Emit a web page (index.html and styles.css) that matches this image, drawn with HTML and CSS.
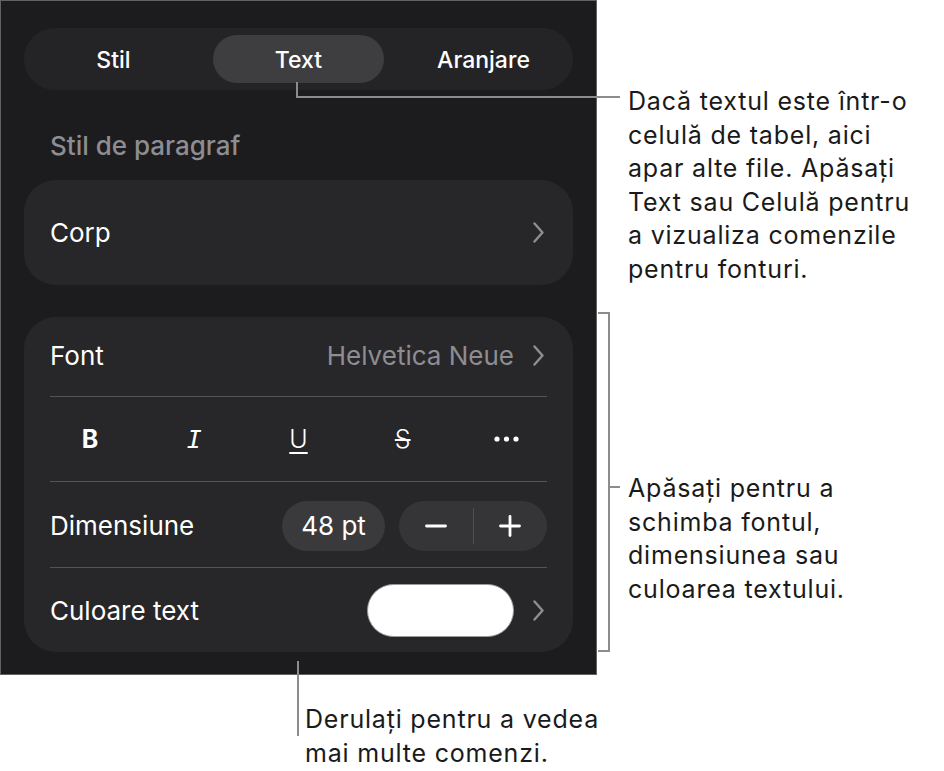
FILE: index.html
```html
<!DOCTYPE html>
<html lang="ro">
<head>
    <meta charset="UTF-8">
    <meta name="viewport" content="width=device-width, initial-scale=1.0">
    <title>Format text</title>
    <link rel="stylesheet" href="styles.css">
</head>
<body>
<div class="page">
    <div class="panel">
        <div class="segmented">
            <div class="seg">Stil</div>
            <div class="seg active">Text</div>
            <div class="seg">Aranjare</div>
        </div>

        <div class="section-title">Stil de paragraf</div>

        <div class="card card-style">
            <div class="row">
                <span class="label">Corp</span>
                <svg class="chevron" viewBox="0 0 11 21"><polyline points="1.5,1.5 9.5,10.5 1.5,19.5"/></svg>
            </div>
        </div>

        <div class="card card-font">
            <div class="row row-font">
                <span class="label">Font</span>
                <span class="value">Helvetica Neue</span>
                <svg class="chevron" viewBox="0 0 11 21"><polyline points="1.5,1.5 9.5,10.5 1.5,19.5"/></svg>
            </div>
            <div class="divider"></div>
            <div class="row row-styles">
                <span class="style-btn bold">B</span>
                <span class="style-btn italic">I</span>
                <span class="style-btn under">U</span>
                <span class="style-btn strike">S</span>
                <span class="style-btn more">
                    <svg viewBox="0 0 25 6" width="25" height="6">
                        <circle cx="3" cy="3" r="2.6"/>
                        <circle cx="12.5" cy="3" r="2.6"/>
                        <circle cx="22" cy="3" r="2.6"/>
                    </svg>
                </span>
            </div>
            <div class="divider"></div>
            <div class="row row-size">
                <span class="label">Dimensiune</span>
                <span class="size-value">48 pt</span>
                <div class="stepper">
                    <span class="step">
                        <svg viewBox="0 0 22 22" width="22" height="22"><line x1="1.5" y1="11" x2="20.5" y2="11"/></svg>
                    </span>
                    <span class="step-sep"></span>
                    <span class="step">
                        <svg viewBox="0 0 22 22" width="22" height="22"><line x1="1.5" y1="11" x2="20.5" y2="11"/><line x1="11" y1="1.5" x2="11" y2="20.5"/></svg>
                    </span>
                </div>
            </div>
            <div class="divider"></div>
            <div class="row row-color">
                <span class="label">Culoare text</span>
                <span class="swatch"></span>
                <svg class="chevron" viewBox="0 0 11 21"><polyline points="1.5,1.5 9.5,10.5 1.5,19.5"/></svg>
            </div>
        </div>
    </div>

    <!-- callouts -->
    <div class="leader tab-down"></div>
    <div class="leader tab-across"></div>
    <p class="note note-tabs">Dacă textul este într-o<br>celulă de tabel, aici<br>apar alte file. Apăsați<br>Text sau Celulă pentru<br>a vizualiza comenzile<br>pentru fonturi.</p>

    <div class="bracket"></div>
    <div class="leader bracket-tick"></div>
    <p class="note note-font">Apăsați pentru a<br>schimba fontul,<br>dimensiunea sau<br>culoarea textului.</p>

    <div class="leader scroll-down"></div>
    <p class="note note-scroll">Derulați pentru a vedea<br>mai multe comenzi.</p>
</div>
</body>
</html>
```

FILE: styles.css
```css
body {
    margin: 0;
    background: #fff;
    font-family: Inter, "Noto Sans", sans-serif;
}
.page {
    position: relative;
    width: 944px;
    height: 771px;
}
.panel {
    box-sizing: border-box;
    width: 597px;
    height: 675px;
    padding: 27px 23px 0;
    background: #1c1c1e;
    border: 1px solid #626264;
    color: #fff;
}
.segmented {
    box-sizing: border-box;
    display: grid;
    grid-template-columns: repeat(3, 1fr);
    gap: 14px;
    height: 62px;
    padding: 7px 4px;
    background: #242426;
    border-radius: 31px;
}
.seg {
    display: flex;
    align-items: center;
    justify-content: center;
    padding-top: 1px;
    border-radius: 24px;
    font-size: 23px;
    font-weight: 500;
}
.seg.active {
    background: #3e3e40;
}
.section-title {
    margin: 42px 0 0 26px;
    height: 28px;
    line-height: 28px;
    font-size: 26px;
    font-weight: 500;
    color: #8d8d92;
}
.card {
    background: #272729;
    border-radius: 32px;
    padding: 0 26px;
}
.card-style {
    margin-top: 20px;
}
.card-style .row {
    height: 105px;
}
.card-font {
    margin-top: 32px;
}
.row {
    display: flex;
    align-items: center;
}
.label {
    font-size: 26px;
    flex: 1;
}
.value {
    font-size: 26px;
    color: #8d8d92;
}
.chevron {
    width: 11px;
    height: 21px;
    margin-left: 19px;
    margin-right: 3px;
    fill: none;
    stroke: #8e8e93;
    stroke-width: 2.4;
    stroke-linecap: round;
    stroke-linejoin: round;
}
.divider {
    height: 1px;
    background: #545456;
}
.row-font {
    height: 77px;
    padding-bottom: 2px;
}
.row-styles {
    height: 84px;
    margin: 0 -12px;
    display: grid;
    grid-template-columns: repeat(5, 1fr);
    align-items: center;
    justify-items: center;
}
.style-btn {
    font-size: 25px;
    color: #fff;
    line-height: 1;
}
.style-btn.bold {
    font-weight: 700;
}
.style-btn.italic {
    font-family: "DejaVu Sans Mono", monospace;
    font-style: oblique;
    font-size: 25px;
}
.style-btn.under {
    font-weight: 300;
    text-decoration: underline;
    text-decoration-thickness: 2px;
    text-underline-offset: 4px;
}
.style-btn.strike {
    font-weight: 300;
    text-decoration: line-through;
    text-decoration-thickness: 2px;
}
.style-btn.more svg {
    display: block;
    fill: #fff;
}
.row-size {
    height: 85px;
    padding-top: 2px;
    box-sizing: border-box;
}
.size-value {
    box-sizing: border-box;
    width: 103px;
    height: 50px;
    line-height: 50px;
    text-align: center;
    border-radius: 25px;
    background: #3a3a3c;
    font-size: 26px;
}
.stepper {
    display: flex;
    align-items: center;
    width: 148px;
    height: 50px;
    margin-left: 14px;
    border-radius: 25px;
    background: #353537;
}
.step {
    flex: 1;
    display: flex;
    justify-content: center;
}
.step svg {
    stroke: #fff;
    stroke-width: 2.8;
    stroke-linecap: round;
}
.step-sep {
    width: 1px;
    height: 36px;
    background: #505052;
}
.row-color {
    height: 84px;
}
.swatch {
    box-sizing: border-box;
    width: 147px;
    height: 53px;
    border-radius: 27px;
    background: #fff;
    border: 1.5px solid #9a9a9a;
}

/* callout leaders and notes */
.leader {
    position: absolute;
    background: #8c8c8c;
}
.tab-down {
    left: 296px;
    top: 82px;
    width: 2px;
    height: 16px;
}
.tab-across {
    left: 296px;
    top: 96px;
    width: 324px;
    height: 2px;
}
.bracket {
    position: absolute;
    left: 598px;
    top: 312px;
    width: 10px;
    height: 336px;
    border: 2px solid #8c8c8c;
    border-left: none;
}
.bracket-tick {
    left: 610px;
    top: 486px;
    width: 10px;
    height: 2px;
}
.scroll-down {
    left: 297px;
    top: 661px;
    width: 2px;
    height: 75px;
}
.note {
    position: absolute;
    margin: 0;
    font-size: 25px;
    letter-spacing: 0.8px;
    line-height: 33.5px;
    white-space: nowrap;
    color: #1a1a1a;
}
.note-tabs {
    left: 628px;
    top: 85px;
}
.note-font {
    left: 628px;
    top: 472px;
}
.note-scroll {
    left: 305px;
    top: 703px;
}
```
